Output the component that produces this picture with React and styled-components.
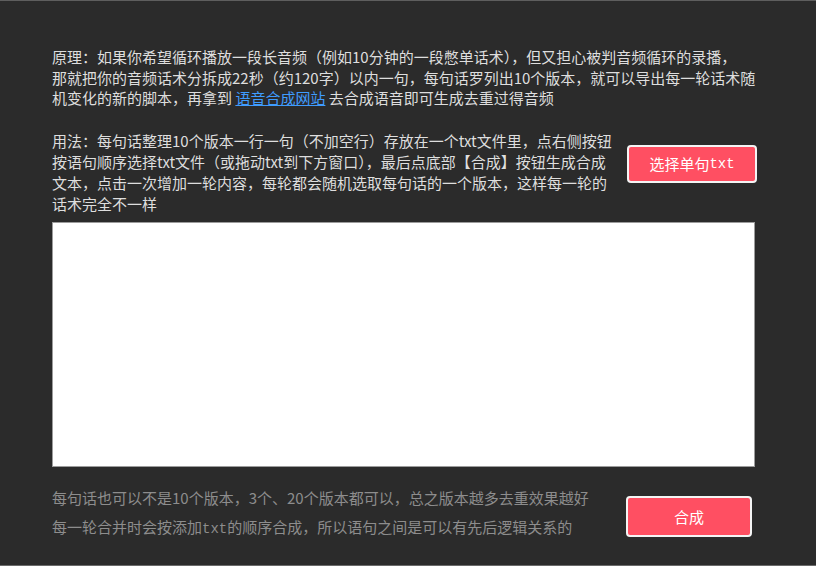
import styled, { createGlobalStyle } from 'styled-components'

const GlobalStyle = createGlobalStyle`
  html, body {
    margin: 0;
    padding: 0;
    background: #2b2b2b;
  }
`

const Window = styled.div`
  box-sizing: border-box;
  width: 816px;
  height: 566px;
  background: #2b2b2b;
  border-top: 1px solid #5e5e5e;
  border-bottom: 1px solid #6a6a6a;
  padding: 46px 0 0 52px;
  display: flex;
  flex-direction: column;
  font-family: "Noto Sans CJK SC", "Noto Sans", sans-serif;
  color: #dedede;
  font-size: 15px;
`

const Intro = styled.p`
  margin: 0;
  line-height: 20.5px;
  white-space: nowrap;
`

const Link = styled.a`
  color: #3f9cff;
  text-decoration: underline;
  cursor: pointer;
`

const UsageRow = styled.div`
  display: flex;
  align-items: flex-start;
  gap: 15px;
  margin-top: 21px;
`

const Usage = styled.p`
  margin: 0;
  width: 560px;
  line-height: 21px;
  white-space: nowrap;
`

const Mono = styled.span`
  font-family: "Liberation Mono", "DejaVu Sans Mono", monospace;
  font-size: ${p => p.$size || '14px'};
`

const Button = styled.button`
  box-sizing: border-box;
  width: ${p => p.$w}px;
  height: ${p => p.$h}px;
  margin-top: ${p => p.$top || 0}px;
  background: #ff4f62;
  border: 2px solid #f4f4f4;
  border-radius: 4px;
  color: #fff;
  font-family: "Noto Sans CJK SC", sans-serif;
  font-size: 15px;
  display: flex;
  align-items: center;
  justify-content: center;
  padding: 0;
  cursor: pointer;
`

const Editor = styled.textarea`
  box-sizing: border-box;
  width: 703px;
  height: 245px;
  margin-top: 8px;
  background: #fff;
  border: 1px solid #9c9c9c;
  resize: none;
  outline: none;
  font-family: "Noto Sans CJK SC", sans-serif;
  font-size: 14px;
`

const Footer = styled.div`
  display: flex;
  align-items: flex-start;
  margin-top: 16px;
`

const Hint = styled.p`
  margin: 0;
  width: 574px;
  line-height: 29px;
  color: #8d8d8d;
  white-space: nowrap;
`

export default function App() {
  return (
    <>
      <GlobalStyle />
      <Window>
        <Intro>
          原理：如果你希望循环播放一段长音频（例如10分钟的一段憋单话术），但又担心被判音频循环的录播，<br />
          那就把你的音频话术分拆成22秒（约120字）以内一句，每句话罗列出10个版本，就可以导出每一轮话术随<br />
          机变化的新的脚本，再拿到 <Link>语音合成网站</Link> 去合成语音即可生成去重过得音频
        </Intro>
        <UsageRow>
          <Usage>
            用法：每句话整理10个版本一行一句（不加空行）存放在一个txt文件里，点右侧按钮<br />
            按语句顺序选择txt文件（或拖动txt到下方窗口），最后点底部【合成】按钮生成合成<br />
            文本，点击一次增加一轮内容，每轮都会随机选取每句话的一个版本，这样每一轮的<br />
            话术完全不一样
          </Usage>
          <Button $w={130} $h={38} $top={15}>
            选择单句<Mono>txt</Mono>
          </Button>
        </UsageRow>
        <Editor />
        <Footer>
          <Hint>
            每句话也可以不是10个版本，3个、20个版本都可以，总之版本越多去重效果越好<br />
            每一轮合并时会按添加<Mono>txt</Mono>的顺序合成，所以语句之间是可以有先后逻辑关系的
          </Hint>
          <Button $w={126} $h={41} $top={13}>
            合成
          </Button>
        </Footer>
      </Window>
    </>
  )
}
